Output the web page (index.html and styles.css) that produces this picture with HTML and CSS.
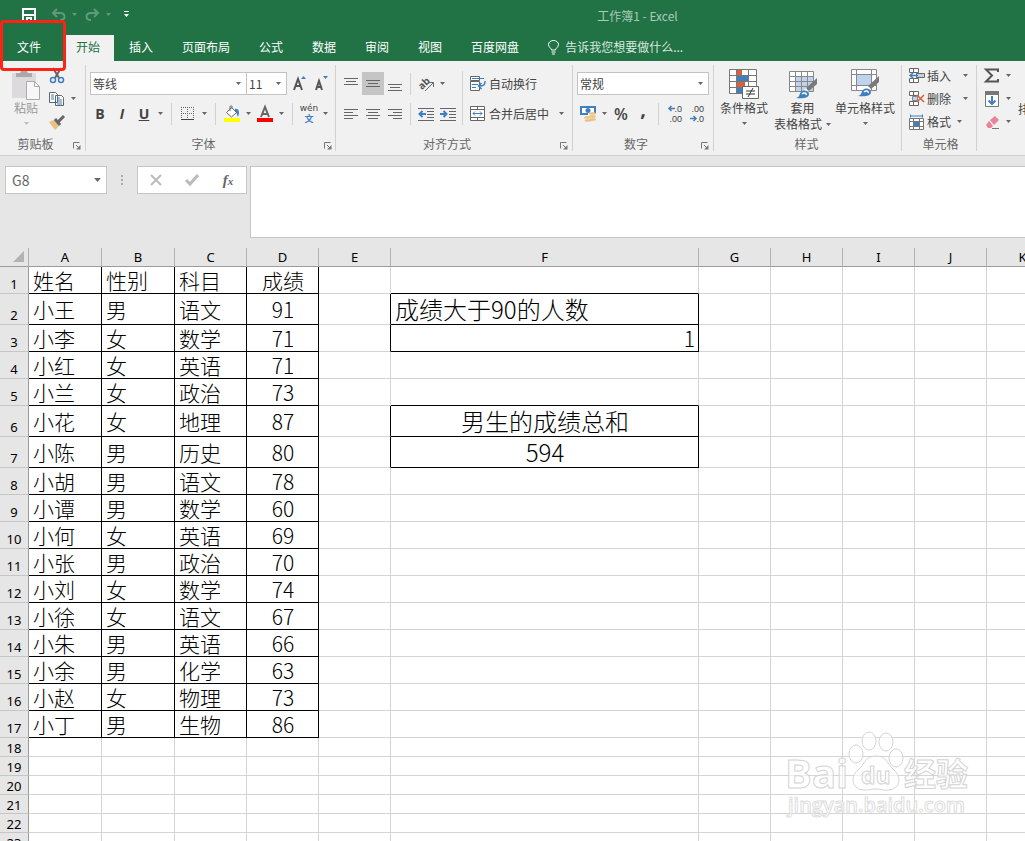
FILE: index.html
```html
<!DOCTYPE html>
<html lang="zh-CN">
<head>
<meta charset="utf-8">
<title>工作簿1 - Excel</title>
<link rel="stylesheet" href="styles.css">
</head>
<body>
<svg class="defs" aria-hidden="true">
  <symbol id="arrow" viewBox="0 0 5 3"><path d="M0 0h5L2.500 3z" fill="currentColor"/></symbol>
  <symbol id="launch" viewBox="0 0 8 8"><path d="M.5 6.500V.5h6M3 3l3 3" fill="none" stroke="#777"/><path d="M7.500 3v4.500H3z" fill="#777"/></symbol>
  <symbol id="brush" viewBox="0 0 22 22"><path d="M21 1v6l-8 7-3-3z" fill="#7a7a7a"/><path d="M9 12l3 3" stroke="#fff" stroke-width="2"/><path d="M0 21c4-1 3-4 5-6 3-3 8-1 8 2 0 4-6 5-13 4z" fill="#3f7fbf"/><path d="M6 17c2-2 5-1 4 1" fill="none" stroke="#fff" stroke-width="1.500"/></symbol>
</svg>
<div class="app">
  <header class="top">
    <div class="titlebar">
      <div class="quick">
        <button class="qbtn" aria-label="保存"><svg width="14" height="14" viewBox="0 0 14 14"><path d="M1 1h12v12H1zM1 7h12" fill="none" stroke="#fff" stroke-width="2"/><path d="M4 9h6v5H4z" fill="#fff"/><path d="M6 11h2v3H6z" fill="#217346"/></svg></button>
        <button class="qbtn dim" aria-label="撤消"><svg width="15" height="13" viewBox="0 0 15 13"><path d="M6 1L2 5l4 4M2 5h7c6 0 6 7 0 7" fill="none" stroke="currentColor" stroke-width="2"/></svg></button>
        <button class="drop dim" aria-label="撤消列表"><svg class="arrow"><use href="#arrow"/></svg></button>
        <button class="qbtn dim" aria-label="恢复"><svg width="15" height="13" viewBox="0 0 15 13"><path d="M9 1l4 4-4 4M13 5H6c-6 0-6 7 0 7" fill="none" stroke="currentColor" stroke-width="2"/></svg></button>
        <button class="drop dim" aria-label="恢复列表"><svg class="arrow"><use href="#arrow"/></svg></button>
        <button class="qbtn custom" aria-label="自定义快速访问工具栏"><svg width="5" height="7" viewBox="0 0 5 7"><path d="M0 0h5v1H0zM0 3h5L2.500 6z" fill="#fff"/></svg></button>
      </div>
      <h1 class="title">工作簿1 - Excel</h1>
    </div>
    <nav class="tabs">
      <button class="tab file">文件</button>
      <button class="tab active">开始</button>
      <button class="tab">插入</button>
      <button class="tab">页面布局</button>
      <button class="tab">公式</button>
      <button class="tab">数据</button>
      <button class="tab">审阅</button>
      <button class="tab">视图</button>
      <button class="tab">百度网盘</button>
      <button class="tab tell"><svg width="11" height="15" viewBox="0 0 11 15"><path d="M3.500 10c0-2-3-2.500-3-5.500a5 4 0 0 1 10 0c0 3-3 3.500-3 5.500zM3.500 12h4M4 14h3" fill="none" stroke="#fff"/></svg>告诉我您想要做什么...</button>
    </nav>
  </header>

  <section class="ribbon">
    <div class="group clipboard">
      <div class="body">
        <button class="big faded"><svg width="28" height="30" viewBox="0 0 28 30"><path d="M0 3h24v25H0z" fill="#dcdadd"/><path d="M4 7V3h4c1-4 7-4 8 0h4v4z" fill="#aaa"/><path d="M14.500 11.500h8l5 5v13h-13z" fill="#f7f6f8" stroke="#aaa"/><path d="M22.500 11.500v5h5" fill="none" stroke="#aaa"/></svg><span>粘贴</span><svg class="arrow"><use href="#arrow"/></svg></button>
        <div class="stack">
          <button class="cmd" aria-label="剪切"><svg width="16" height="16" viewBox="0 0 16 16"><path d="M4 0l6 10M12 0L6 10" stroke="#666" stroke-width="2"/><circle cx="4" cy="12" r="2.500" fill="none" stroke="#3f7fbf" stroke-width="1.500"/><circle cx="12" cy="12" r="2.500" fill="none" stroke="#3f7fbf" stroke-width="1.500"/></svg></button>
          <button class="cmd" aria-label="复制"><svg width="16" height="16" viewBox="0 0 16 16"><path d="M.5 1.500h6l2 2v8h-8zM6.500 4.500h6l2 2v8h-8z" fill="#fff" stroke="#666"/><path d="M2 4h3M2 6h3M2 8h3M8 7h3M8 9h5M8 11h5M8 13h5" stroke="#3f7fbf"/></svg><svg class="arrow"><use href="#arrow"/></svg></button>
          <button class="cmd" aria-label="格式刷"><svg width="16" height="16" viewBox="0 0 16 16"><path d="M0 8l5-2 5 6-4 4z" fill="#ecc07e"/><path d="M6 5l5 6M9 8l6-6" stroke="#666" stroke-width="3"/></svg></button>
        </div>
      </div>
      <div class="caption"><span>剪贴板</span><button class="launch" aria-label="剪贴板选项"><svg width="8" height="8"><use href="#launch"/></svg></button></div>
    </div>

    <div class="group font">
      <div class="body rows">
        <div class="row">
          <label class="combo family"><select aria-label="字体"><option>等线</option></select><svg class="arrow"><use href="#arrow"/></svg></label>
          <label class="combo size"><select aria-label="字号"><option>11</option></select><svg class="arrow"><use href="#arrow"/></svg></label>
          <button class="tool" aria-label="增大字号"><svg width="16" height="17" viewBox="0 0 16 17"><path d="M3 15L7 4l4 11M4 11h6" fill="none" stroke="#555" stroke-width="2"/><path d="M10 4l2.500-3L15 4z" fill="#3f7fbf"/></svg></button>
          <button class="tool" aria-label="减小字号"><svg width="16" height="17" viewBox="0 0 16 17"><path d="M3 15l3-9 3 9M4 12h5" fill="none" stroke="#555" stroke-width="2"/><path d="M10 1h5l-2.500 3z" fill="#3f7fbf"/></svg></button>
        </div>
        <div class="row">
          <button class="tool"><b>B</b></button>
          <button class="tool"><b><i>I</i></b></button>
          <button class="tool"><b><u>U</u></b></button>
          <button class="drop" aria-label="下划线样式"><svg class="arrow"><use href="#arrow"/></svg></button>
          <span class="rule wide"></span>
          <button class="tool" aria-label="边框"><svg width="14" height="14" viewBox="0 0 14 14"><path d="M0 .5h14M0 6.500h14M.5 0v12M6.500 0v12M12.500 0v12" stroke="#666" stroke-dasharray="1 1"/><path d="M0 12.500h13" stroke="#444"/></svg></button>
          <button class="drop" aria-label="边框样式"><svg class="arrow"><use href="#arrow"/></svg></button>
          <span class="rule wide"></span>
          <button class="tool" aria-label="填充颜色"><svg width="16" height="17" viewBox="0 0 16 17"><path d="M2.500 7.500l5-5 5 5-5 4.500z" fill="#fff" stroke="#666"/><path d="M6 6V1.500c0-1 2-1 2 0V4" fill="none" stroke="#666"/><path d="M11 4c4-1 5 4 3 8-1-2-1-4-3-6z" fill="#3f7fbf"/><path d="M0 13h16v4H0z" fill="#ff0"/></svg></button>
          <button class="drop" aria-label="填充颜色列表"><svg class="arrow"><use href="#arrow"/></svg></button>
          <button class="tool" aria-label="字体颜色"><svg width="16" height="17" viewBox="0 0 16 17"><path d="M4 12L8 2l4 10M5 9h6" fill="none" stroke="#666" stroke-width="2"/><path d="M0 13h16v4H0z" fill="red"/></svg></button>
          <button class="drop" aria-label="字体颜色列表"><svg class="arrow"><use href="#arrow"/></svg></button>
          <span class="rule wide"></span>
          <button class="tool phonetic"><span>wén</span><span class="blue">文</span></button>
          <button class="drop" aria-label="拼音列表"><svg class="arrow"><use href="#arrow"/></svg></button>
        </div>
      </div>
      <div class="caption"><span>字体</span><button class="launch" aria-label="字体设置"><svg width="8" height="8"><use href="#launch"/></svg></button></div>
    </div>

    <div class="group">
      <div class="body align">
        <div class="rows">
          <div class="row">
            <button class="tool" aria-label="顶端对齐"><svg width="14" height="14" viewBox="0 0 14 14"><path d="M0 1.500h14M2 4.500h10M0 7.500h14" stroke="#666"/></svg></button>
            <button class="tool on" aria-label="垂直居中"><svg width="14" height="14" viewBox="0 0 14 14"><path d="M0 3.500h14M2 6.500h10M0 9.500h14" stroke="#666"/></svg></button>
            <button class="tool" aria-label="底端对齐"><svg width="14" height="14" viewBox="0 0 14 14"><path d="M0 7.500h14M2 10.500h10M0 13.500h14" stroke="#666"/></svg></button>
            <span class="rule"></span>
            <button class="tool" aria-label="方向"><svg width="17" height="16" viewBox="0 0 17 16"><text x="0" y="11" class="ab" transform="rotate(-45 6 8)">ab</text><path d="M7 15l8-8M11 6.500h4.500V11" fill="none" stroke="#666"/></svg></button>
            <button class="drop" aria-label="方向列表"><svg class="arrow"><use href="#arrow"/></svg></button>
          </div>
          <div class="row">
            <button class="tool" aria-label="左对齐"><svg width="14" height="14" viewBox="0 0 14 14"><path d="M0 2.500h14M0 5.500h9M0 8.500h14M0 11.500h9" stroke="#666"/></svg></button>
            <button class="tool" aria-label="居中"><svg width="14" height="14" viewBox="0 0 14 14"><path d="M0 2.500h14M2 5.500h10M0 8.500h14M2 11.500h10" stroke="#666"/></svg></button>
            <button class="tool" aria-label="右对齐"><svg width="14" height="14" viewBox="0 0 14 14"><path d="M0 2.500h14M5 5.500h9M0 8.500h14M5 11.500h9" stroke="#666"/></svg></button>
            <span class="rule"></span>
            <button class="tool" aria-label="减少缩进"><svg width="16" height="14" viewBox="0 0 16 14"><path d="M0 1.500h16M9 4.500h7M9 7.500h7M9 10.500h7M0 13.500h16" stroke="#666"/><path d="M8 7H2M4.500 4L1.500 7l3 3" fill="none" stroke="#3f7fbf" stroke-width="2"/></svg></button>
            <button class="tool" aria-label="增加缩进"><svg width="16" height="14" viewBox="0 0 16 14"><path d="M0 1.500h16M9 4.500h7M9 7.500h7M9 10.500h7M0 13.500h16" stroke="#666"/><path d="M0 7h6M3.500 4l3 3-3 3" fill="none" stroke="#3f7fbf" stroke-width="2"/></svg></button>
          </div>
        </div>
        <span class="rule tall"></span>
        <div class="rows">
          <button class="text"><svg width="16" height="16" viewBox="0 0 16 16"><path d="M.5.5h9v4h-9zM.5 5.500h9v9h-9z" fill="#fff" stroke="#666"/><path d="M2 2.500h12M2 8.500h6M2 11.500h4" stroke="#3f7fbf"/><path d="M15 5c0 4-1 5-6 5M11.500 7L8.500 10l3 3" fill="none" stroke="#3f7fbf" stroke-width="1.500"/></svg><span>自动换行</span></button>
          <button class="text"><svg width="16" height="16" viewBox="0 0 16 16"><path d="M.5.5h14v14H.5zM.5 3.500h14M.5 11.500h14M7.500.5v3M7.500 11.500v3" fill="#fff" stroke="#666"/><path d="M3 7.500h9M5 5.500l-2 2 2 2M10 5.500l2 2-2 2" fill="none" stroke="#3f7fbf"/></svg><span>合并后居中</span><svg class="arrow"><use href="#arrow"/></svg></button>
        </div>
      </div>
      <div class="caption"><span>对齐方式</span><button class="launch" aria-label="对齐设置"><svg width="8" height="8"><use href="#launch"/></svg></button></div>
    </div>

    <div class="group">
      <div class="body rows">
        <label class="combo format"><select aria-label="数字格式"><option>常规</option></select><svg class="arrow"><use href="#arrow"/></svg></label>
        <div class="row">
          <button class="tool" aria-label="会计数字格式"><svg width="17" height="17" viewBox="0 0 17 17"><path d="M0 1h16v9H0z" fill="#3f7fbf"/><path d="M2 3h12v5H2z" fill="#fff"/><circle cx="8" cy="5.500" r="2.500" fill="#3f7fbf"/><path d="M8 8h8v9H4v-5h4z" fill="#f1f1f1"/><g fill="#ecc07e"><ellipse cx="12.500" cy="8.500" rx="3.500" ry="1.200"/><ellipse cx="12.500" cy="11.500" rx="3.500" ry="1.200"/><ellipse cx="12.500" cy="14.500" rx="3.500" ry="1.200"/><ellipse cx="7" cy="12.500" rx="3" ry="1.200"/><ellipse cx="8" cy="15.500" rx="3.500" ry="1.200"/></g></svg></button>
          <button class="drop" aria-label="会计格式列表"><svg class="arrow"><use href="#arrow"/></svg></button>
          <button class="tool percent">%</button>
          <button class="tool comma">,</button>
          <span class="rule"></span>
          <button class="tool decimals"><span><svg width="7" height="7" viewBox="0 0 7 7"><path d="M7 3.500H1M3.500 1L1 3.500 3.500 6" fill="none" stroke="#3f7fbf" stroke-width="1.500"/></svg>.0</span><span>.00</span></button>
          <button class="tool decimals"><span>.00</span><span><svg width="7" height="7" viewBox="0 0 7 7"><path d="M0 3.500h6M3.500 1L6 3.500 3.500 6" fill="none" stroke="#3f7fbf" stroke-width="1.500"/></svg>.0</span></button>
        </div>
      </div>
      <div class="caption"><span>数字</span><button class="launch" aria-label="数字设置"><svg width="8" height="8"><use href="#launch"/></svg></button></div>
    </div>

    <div class="group styles">
      <div class="body">
        <button class="big"><svg width="32" height="32" viewBox="0 0 32 32"><path d="M1.500 1.500h27v24h-27z" fill="#fff"/><path d="M9 2h5v5H9zM9 14h8v5H9z" fill="#d8603c"/><path d="M9 8h11v5H9zM9 20h5v5H9z" fill="#3f7fbf"/><path d="M1.500 1.500h27v24h-27zM8.500 1.500v24M20.500 1.500v24M1.500 7.500h27M1.500 13.500h27M1.500 19.500h27" fill="none" stroke="#777"/><path d="M14.500 18.500h16v12h-16z" fill="#fff" stroke="#666"/><path d="M18 23h9M18 26h9M25 20l-5 9" stroke="#333"/></svg><span>条件格式</span><svg class="arrow"><use href="#arrow"/></svg></button>
        <button class="big"><svg width="32" height="32" viewBox="0 0 32 32"><path d="M2.500 3.500h24v20h-24z" fill="#fff"/><path d="M9 9h18v15H9z" fill="#c0d3ea"/><path d="M2.500 3.500h24v20h-24zM8.500 3.500v20M14.500 3.500v20M20.500 3.500v20M2.500 8.500h24M2.500 13.500h24M2.500 18.500h24" fill="none" stroke="#888"/><use href="#brush" x="9" y="9" width="22" height="22"/></svg><span>套用</span><span class="last">表格格式<svg class="arrow"><use href="#arrow"/></svg></span></button>
        <button class="big"><svg width="32" height="32" viewBox="0 0 32 32"><path d="M2.500 1.500h25v21h-25z" fill="#fff"/><path d="M8 7h14v10H8z" fill="#c0d3ea"/><path d="M2.500 1.500h25v21h-25zM7.500 1.500v21M22.500 1.500v21M2.500 6.500h25M2.500 17.500h25" fill="none" stroke="#888"/><use href="#brush" x="9" y="7" width="22" height="22"/></svg><span>单元格样式</span><svg class="arrow"><use href="#arrow"/></svg></button>
      </div>
      <div class="caption"><span>样式</span></div>
    </div>

    <div class="group cells">
      <div class="body stack">
        <button class="cmd"><svg width="16" height="16" viewBox="0 0 16 16"><path d="M.5.5h9v4h-9zM.5 10.500h9v4h-9zM4.500.5v4M4.500 10.500v4" fill="#fff" stroke="#666"/><path d="M7.500 5.500h8v4h-8z" fill="#c0d3ea" stroke="#666"/><path d="M9 7.500H1M4 5L1 7.500 4 10" fill="none" stroke="#3f7fbf" stroke-width="1.500"/></svg><span>插入</span><svg class="arrow far"><use href="#arrow"/></svg></button>
        <button class="cmd"><svg width="16" height="16" viewBox="0 0 16 16"><path d="M.5.5h9v4h-9zM.5 10.500h9v4h-9zM4.500.5v4M4.500 10.500v4" fill="#fff" stroke="#666"/><path d="M3.500 5.500h5v4h-5z" fill="#c0d3ea" stroke="#888"/><path d="M8 4l7 7M15 4l-7 7" stroke="#d8603c" stroke-width="1.500"/></svg><span>删除</span><svg class="arrow far"><use href="#arrow"/></svg></button>
        <button class="cmd"><svg width="16" height="16" viewBox="0 0 16 16"><path d="M1.500.5v3M13.500.5v3M2 2h12" stroke="#3f7fbf"/><path d="M.5 4.500h14v11H.5z" fill="#fff"/><path d="M5 8h5v5H5z" fill="#3f7fbf"/><path d="M.5 4.500h14v11H.5zM4.500 4.500v11M10.500 4.500v11M.5 7.500h14M.5 12.500h14" fill="none" stroke="#777"/></svg><span>格式</span><svg class="arrow"><use href="#arrow"/></svg></button>
      </div>
      <div class="caption"><span>单元格</span></div>
    </div>

    <div class="group edit">
      <div class="body">
        <div class="stack">
          <button class="cmd" aria-label="自动求和"><svg width="16" height="16" viewBox="0 0 16 16"><path d="M14 4V1.500H2L8 7.500l-6 6h12V11" fill="none" stroke="#555" stroke-width="2"/></svg><svg class="arrow"><use href="#arrow"/></svg></button>
          <button class="cmd" aria-label="填充"><svg width="16" height="16" viewBox="0 0 16 16"><path d="M1.500.5h13v15h-13z" fill="#fff" stroke="#777"/><path d="M1 0h14v4H1z" fill="#777"/><path d="M8 5v8M4.500 9.500L8 13l3.500-3.500" fill="none" stroke="#3f7fbf" stroke-width="2"/></svg><svg class="arrow"><use href="#arrow"/></svg></button>
          <button class="cmd" aria-label="清除"><svg width="16" height="16" viewBox="0 0 16 16"><path d="M6 6l5-4 4 4-5 5z" fill="#e8839a"/><path d="M5 7l4 5-2 2H4l-2-3z" fill="#e8839a"/><path d="M8 14.500h7" stroke="#777"/></svg><svg class="arrow"><use href="#arrow"/></svg></button>
        </div>
        <button class="sort">排序和筛选</button>
      </div>
    </div>
  </section>

  <section class="formula">
    <label class="namebox"><input value="G8" aria-label="名称框"><svg class="arrow"><use href="#arrow"/></svg></label>
    <svg class="grip" width="2" height="12" viewBox="0 0 2 12"><path d="M0 1h2v2H0zM0 5h2v2H0zM0 9h2v2H0z" fill="#aaa"/></svg>
    <div class="entry">
      <button aria-label="取消"><svg width="12" height="12" viewBox="0 0 12 12"><path d="M1 1l10 10M11 1L1 11" stroke="#bbb" stroke-width="2"/></svg></button>
      <button aria-label="输入"><svg width="14" height="12" viewBox="0 0 14 12"><path d="M1 6l4 4 8-9" fill="none" stroke="#bbb" stroke-width="3"/></svg></button>
      <button class="fx"><i>f<small>x</small></i></button>
    </div>
    <textarea class="input" aria-label="编辑栏"></textarea>
  </section>

  <main class="sheet">
    <table class="grid">
      <colgroup><col class="c-head"><col class="c-ab"><col class="c-ab"><col><col><col><col class="c-f"><col><col><col><col><col></colgroup>
      <thead><tr><th><svg class="corner" width="11" height="11" viewBox="0 0 11 11"><path d="M11 0v11H0z" fill="#b3b3b3"/></svg></th><th>A</th><th>B</th><th>C</th><th>D</th><th>E</th><th>F</th><th>G</th><th>H</th><th>I</th><th>J</th><th>K</th></tr></thead>
      <tbody class="filled">
        <tr><th>1</th><td>姓名</td><td>性别</td><td>科目</td><td>成绩</td><td></td><td class="over"></td><td></td><td></td><td></td><td></td><td></td></tr>
        <tr class="high"><th>2</th><td>小王</td><td>男</td><td>语文</td><td>91</td><td class="edge"></td><td class="box large">成绩大于90的人数</td><td></td><td></td><td></td><td></td><td></td></tr>
        <tr><th>3</th><td>小李</td><td>女</td><td>数学</td><td>71</td><td class="edge"></td><td class="box end">1</td><td></td><td></td><td></td><td></td><td></td></tr>
        <tr><th>4</th><td>小红</td><td>女</td><td>英语</td><td>71</td><td></td><td></td><td></td><td></td><td></td><td></td><td></td></tr>
        <tr><th>5</th><td>小兰</td><td>女</td><td>政治</td><td>73</td><td></td><td class="over"></td><td></td><td></td><td></td><td></td><td></td></tr>
        <tr class="high"><th>6</th><td>小花</td><td>女</td><td>地理</td><td>87</td><td class="edge"></td><td class="box large mid">男生的成绩总和</td><td></td><td></td><td></td><td></td><td></td></tr>
        <tr class="high"><th>7</th><td>小陈</td><td>男</td><td>历史</td><td>80</td><td class="edge"></td><td class="box large mid">594</td><td></td><td></td><td></td><td></td><td></td></tr>
        <tr><th>8</th><td>小胡</td><td>男</td><td>语文</td><td>78</td><td></td><td></td><td></td><td></td><td></td><td></td><td></td></tr>
        <tr><th>9</th><td>小谭</td><td>男</td><td>数学</td><td>60</td><td></td><td></td><td></td><td></td><td></td><td></td><td></td></tr>
        <tr><th>10</th><td>小何</td><td>女</td><td>英语</td><td>69</td><td></td><td></td><td></td><td></td><td></td><td></td><td></td></tr>
        <tr><th>11</th><td>小张</td><td>男</td><td>政治</td><td>70</td><td></td><td></td><td></td><td></td><td></td><td></td><td></td></tr>
        <tr><th>12</th><td>小刘</td><td>女</td><td>数学</td><td>74</td><td></td><td></td><td></td><td></td><td></td><td></td><td></td></tr>
        <tr><th>13</th><td>小徐</td><td>女</td><td>语文</td><td>67</td><td></td><td></td><td></td><td></td><td></td><td></td><td></td></tr>
        <tr><th>14</th><td>小朱</td><td>男</td><td>英语</td><td>66</td><td></td><td></td><td></td><td></td><td></td><td></td><td></td></tr>
        <tr><th>15</th><td>小余</td><td>男</td><td>化学</td><td>63</td><td></td><td></td><td></td><td></td><td></td><td></td><td></td></tr>
        <tr><th>16</th><td>小赵</td><td>女</td><td>物理</td><td>73</td><td></td><td></td><td></td><td></td><td></td><td></td><td></td></tr>
        <tr><th>17</th><td>小丁</td><td>男</td><td>生物</td><td>86</td><td></td><td></td><td></td><td></td><td></td><td></td><td></td></tr>
      </tbody>
      <tbody class="blank">
        <tr><th>18</th><td></td><td></td><td></td><td></td><td></td><td></td><td></td><td></td><td></td><td></td><td></td></tr>
        <tr><th>19</th><td></td><td></td><td></td><td></td><td></td><td></td><td></td><td></td><td></td><td></td><td></td></tr>
        <tr><th>20</th><td></td><td></td><td></td><td></td><td></td><td></td><td></td><td></td><td></td><td></td><td></td></tr>
        <tr><th>21</th><td></td><td></td><td></td><td></td><td></td><td></td><td></td><td></td><td></td><td></td><td></td></tr>
        <tr><th>22</th><td></td><td></td><td></td><td></td><td></td><td></td><td></td><td></td><td></td><td></td><td></td></tr>
        <tr><th>23</th><td></td><td></td><td></td><td></td><td></td><td></td><td></td><td></td><td></td><td></td><td></td></tr>
      </tbody>
    </table>
    <svg class="watermark" width="190" height="92" viewBox="0 0 190 92">
      <g class="mark">
        <text x="2" y="57" class="w-big">Bai</text>
        <ellipse cx="73" cy="23" rx="7" ry="9"/><ellipse cx="86" cy="10" rx="7" ry="9"/><ellipse cx="103" cy="11" rx="7" ry="9"/><ellipse cx="113" cy="27" rx="7" ry="9"/>
        <path d="M93 25c-11 0-11 8-18 14-9 7-5 20 6 20 6 0 8-1 12-1 5 0 8 2 13 1 11-1 13-13 5-20-7-6-7-14-18-14z"/>
        <text x="78" y="53" class="w-du">du</text>
        <text x="121" y="55" class="w-cjk">经验</text>
        <text x="5" y="81" class="w-url">jingyan.baidu.com</text>
      </g>
    </svg>
  </main>
  <div class="highlight"></div>
</div>
</body>
</html>
```
FILE: styles.css
```css
* { box-sizing: border-box; }

body {
  margin: 0;
  font: 12px/16px "Noto Sans CJK SC", sans-serif;
  color: #444;
  background: #e6e6e6;
}

button, input, select, textarea { font: inherit; color: inherit; margin: 0; }

button {
  padding: 0;
  border: 0;
  background: none;
  display: flex;
  align-items: center;
  justify-content: center;
  white-space: nowrap;
}

svg { display: block; flex: none; overflow: visible; }
.defs { position: absolute; width: 0; height: 0; }

.app {
  position: relative;
  display: flex;
  flex-direction: column;
  height: 100vh;
  overflow: hidden;
}

.arrow { width: 5px; height: 3px; color: #666; }

/* Title bar and tabs */
.top { flex: none; background: #217346; color: #fff; }
.titlebar { display: grid; grid-template-columns: 250px 1fr; height: 35px; }
.quick { display: flex; align-items: center; padding: 0 0 6px 18px; }
.qbtn { width: 22px; height: 22px; }
.qbtn + .qbtn { margin-left: 7px; }
.quick .drop { margin-right: 1px; }
.dim, .dim .arrow { color: #5f9b7a; }
.title { margin: 0; padding-top: 8px; text-align: center; font-size: 12px; font-weight: 400; color: #a9cbb7; }
.tabs { display: flex; gap: 1px; height: 26px; }
.tab { padding: 0 14px 3px; }
.tab.file { width: 64px; justify-content: flex-start; padding-left: 17px; }
.tab.active { padding-left: 11px; background: #f1f1f1; color: #217346; }
.tab.tell { gap: 6px; padding-bottom: 2px; color: #d9e8df; }

/* Ribbon */
.ribbon {
  flex: none;
  display: flex;
  height: 95px;
  padding: 4px 0;
  overflow: hidden;
  background: #f1f1f1;
  border-bottom: 1px solid #d2d2d2;
}
.group { flex: none; display: flex; flex-direction: column; border-right: 1px solid #d2d2d2; padding: 0 4px; }
.body { flex: 1; display: flex; }
.rows { display: flex; flex-direction: column; gap: 7px; padding-top: 7px; }
.row { display: flex; align-items: center; height: 23px; }
.caption { display: grid; grid-template-columns: 1fr 14px; align-items: center; height: 16px; margin-bottom: -1px; color: #666; text-align: center; }
.launch { padding-top: 4px; justify-content: flex-end; }

.tool { width: 22px; height: 23px; }
.tool.on { background: #c5c5c5; }
.drop { width: 11px; height: 22px; }
.tool b { font: bold 14px/20px "Open Sans", sans-serif; }
.rule { width: 1px; height: 22px; margin: 0 4px; background: #d2d2d2; }
.rule.wide { margin: 0 5px; }
.rule.tall { height: 54px; margin: 6px 4px 0 3px; }
.font { padding: 0 3px; }
.font .family { margin-left: 1px; }

.combo { display: grid; height: 23px; align-items: center; background: #fff; border: 1px solid #c3c3c3; }
.combo select { grid-area: 1 / 1; width: 100%; height: 21px; padding: 0 2px; border: 0; appearance: none; background: none; }
.combo .arrow { grid-area: 1 / 1; justify-self: end; margin-right: 5px; pointer-events: none; }
.family { width: 157px; }
.size { width: 40px; margin-right: 1px; border-left: 0; }
.format { width: 132px; }

.phonetic { flex-direction: column; font: 9px/11px "DejaVu Sans", "Noto Sans CJK SC", sans-serif; }
.blue { color: #3f7fbf; font-weight: 700; }
.percent { font: 600 16px/20px "Open Sans", sans-serif; }
.comma { font: bold 20px/12px "Open Sans", sans-serif; padding-bottom: 10px; }
.decimals { flex-direction: column; align-items: flex-end; padding-right: 3px; font: 9px/10px "Liberation Sans", sans-serif; }
.decimals span { display: flex; align-items: center; }
.ab { font: bold 10px "Open Sans", sans-serif; fill: #555; }

.text { gap: 3px; height: 23px; padding-left: 3px; justify-content: flex-start; }
.text .arrow { margin: 0 4px 0 7px; }

.big { flex-direction: column; justify-content: flex-start; padding-top: 3px; }
.big span { display: flex; align-items: center; }
.big > .arrow { margin-top: 6px; }
.big .last { gap: 4px; }
.faded { color: #999; }
.faded .arrow { color: #bbb; }
.clipboard { width: 86px; }
.clipboard .body { padding-left: 8px; }
.clipboard .big { padding-top: 5px; }
.clipboard .stack { margin-left: 9px; }
.styles { padding-right: 6px; }
.styles .body { gap: 4px; }
.styles .big { min-width: 52px; }

.stack { display: flex; flex-direction: column; margin-top: -1px; }
.cmd { justify-content: flex-start; height: 23px; gap: 2px; }
.cmd .arrow { margin-left: 4px; }
.cmd .far { margin-left: 10px; }
.cells { width: 75px; padding-left: 7px; }
.cells .caption, .styles .caption { grid-template-columns: 1fr; }
.edit { padding-left: 7px; border-right: 0; }
.sort { margin-left: 7px; align-items: flex-start; padding-top: 36px; }

/* Formula bar */
.formula { flex: none; display: flex; align-items: flex-start; height: 92px; padding: 10px 0 10px 5px; }
.namebox { display: grid; align-items: center; width: 102px; height: 28px; border: 1px solid #c6c6c6; background: #fff; }
.namebox input { grid-area: 1 / 1; width: 100%; height: 26px; padding: 0 6px; border: 0; background: none; font-size: 14px; color: #666; }
.namebox .arrow { grid-area: 1 / 1; justify-self: end; width: 7px; height: 4px; margin-right: 5px; }
.grip { margin: 8px 14px; }
.entry { display: flex; align-items: center; justify-content: space-around; width: 110px; height: 28px; border: 1px solid #c6c6c6; background: #fff; }
.entry button { width: 30px; height: 26px; }
.entry .fx { font: bold 15px/20px "Liberation Serif", serif; color: #666; }
.fx small { font-size: 11px; }
.input { flex: 1; height: 72px; margin-left: 3px; border: 1px solid #c6c6c6; border-right: 0; background: #fff; resize: none; }

/* Worksheet */
.sheet { position: relative; flex: 1; min-height: 0; overflow: hidden; background: #fff; }
.grid { width: 0; table-layout: fixed; border-collapse: separate; border-spacing: 0; color: #000; }
.grid col { width: 72px; }
.grid .c-head { width: 29px; }
.grid .c-ab { width: 73px; }
.grid .c-f { width: 308px; }
.grid th {
  padding: 0;
  background: #e6e6e6;
  border-right: 1px solid #9b9b9b;
  border-bottom: 1px solid #c6c6c6;
  font: 13px/16px "Noto Sans", sans-serif;
  vertical-align: bottom;
}
.grid thead th { height: 19px; padding-bottom: 1px; border-right-color: #b1b1b1; border-bottom-color: #9b9b9b; }
.grid .filled th { padding-bottom: 1px; }
.grid td {
  height: 19px;
  padding: 0 3px 0 4px;
  border-right: 1px solid #d4d4d4;
  border-bottom: 1px solid #d4d4d4;
  font-size: 21px;
  line-height: 24px;
  font-weight: 300;
  white-space: nowrap;
}
.filled td { height: 27px; }
.filled .high td { height: 31px; }
.filled td:nth-child(-n+5) { border-color: #000; }
.filled td:nth-child(5) { text-align: center; }
.grid .over { border-bottom-color: #000; }
.grid .edge { border-right-color: #000; }
.grid .box { border-color: #000; }
.grid .large { font-size: 24px; }
.grid .end { text-align: right; }
.grid .mid { text-align: center; }
.corner { margin: 0 4px 3px auto; }

.watermark { position: absolute; right: 52px; bottom: 18px; }
.mark { fill: #fff; fill-opacity: .6; stroke: #d4d4d4; }
.w-big { font: bold 40px "Open Sans", sans-serif; }
.w-du { font: bold 23px "Open Sans", sans-serif; }
.w-cjk { font: bold 32px "Noto Sans CJK SC", sans-serif; }
.w-url { font: 600 20px "Open Sans", sans-serif; stroke: #ddd; }

/* Callout around the File tab */
.highlight { position: absolute; left: 0; top: 20px; width: 66px; height: 51px; border: 3px solid #ff2216; border-radius: 4px; pointer-events: none; }
```
